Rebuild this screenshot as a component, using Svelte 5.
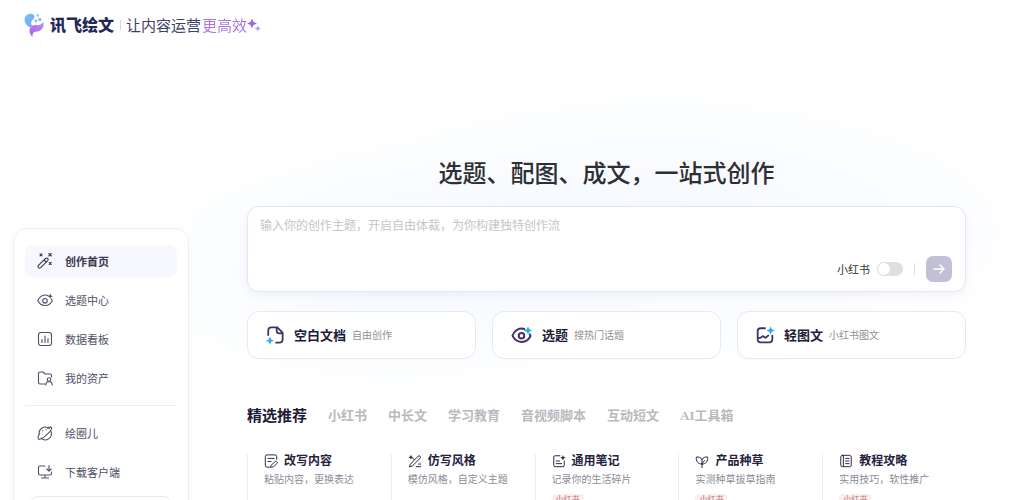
<script>
let topic = $state('')
let redbook = $state(false)
let activeTab = $state('精选推荐')

const menu = [
	{ icon: 'wand', label: '创作首页', active: true },
	{ icon: 'eye', label: '选题中心' },
	{ icon: 'chart', label: '数据看板' },
	{ icon: 'folder', label: '我的资产' },
]

const moreMenu = [
	{ icon: 'planet', label: '绘圈儿' },
	{ icon: 'download', label: '下载客户端' },
]

const entries = [
	{ icon: 'doc', title: '空白文档', sub: '自由创作' },
	{ icon: 'topic', title: '选题', sub: '搜热门话题' },
	{ icon: 'image', title: '轻图文', sub: '小红书图文' },
]

const tabs = ['精选推荐', '小红书', '中长文', '学习教育', '音视频脚本', '互动短文', 'AI工具箱']

const templates = [
	{ icon: 'rewrite', title: '改写内容', desc: '粘贴内容，更换表达' },
	{ icon: 'style', title: '仿写风格', desc: '模仿风格，自定义主题' },
	{ icon: 'note', title: '通用笔记', desc: '记录你的生活碎片', tag: '小红书' },
	{ icon: 'plant', title: '产品种草', desc: '实测种草拔草指南', tag: '小红书' },
	{ icon: 'book', title: '教程攻略', desc: '实用技巧，软性推广', tag: '小红书' },
]
</script>

{#snippet icon(name)}
	<svg class="icon {name}" viewBox="0 0 16 16" aria-hidden="true">
		{#if name === 'wand'}
			<path d="M1.400 12.400 8.500 5.500q1.200-1 2.200 0t0 2.200l-7 7q-1.200 1-2.300 0t0-2.300zM7 7l2.200 2.200" />
			<path d="m3 .8 2 2m0-2-2 2M11.800.5l2.500 2.500m0-2.500L11.800 3M12.200 9.500l2 2m0-2-2 2" />
		{:else if name === 'eye'}
			<path d="M11 3.500C7 2 2.500 4.300.8 8.500c3 6.500 11.400 6.800 14.400.3l-.6-1.800" />
			<circle cx="8" cy="8.800" r="2.300" />
			<path class="fill" d="m13.200 1.500.8 2 2 .8-2 .8-.8 2-.8-2-2-.8 2-.8z" />
		{:else if name === 'chart'}
			<rect x="1.500" y="1.500" width="13" height="13" rx="2.500" />
			<path d="M5 8.500v3M8 5v6.500M11 7.500v4" />
		{:else if name === 'folder'}
			<path d="M8 14H3q-1.500 0-1.500-1.500v-9Q1.500 2 3 2h3l2 2h5q1.500 0 1.500 1.500V7" />
			<circle cx="12" cy="9.500" r="1.800" />
			<path d="M8.800 15q.2-3.300 3.200-3.500 3 .2 3.300 3.500" />
		{:else if name === 'planet'}
			<path d="M12.300 3.600A6.200 6.200 0 0 0 2.200 9.300M4 13.200A6.200 6.200 0 0 0 13.800 6" />
			<path d="M2.300 9.300C.8 11.500.5 13.700 1.800 14.300c3 .6 13.500-8.500 12.900-11.600-.5-1.200-2.600-.4-4.200.4M5.500 5.500v.2M9 4.500v.2" />
		{:else if name === 'download'}
			<path d="M8 2H3Q1.500 2 1.500 3.500v6Q1.500 11 3 11h10q1.500 0 1.500-1.500V8M8 11v3M4.500 14h7M12 1.500V7M9.800 5 12 7.200 14.200 5" />
		{:else if name === 'doc'}
			<path d="M2 8V4q0-2.800 2.800-2.800H10L14.800 6v6q0 2.800-2.800 2.800H9M9.500 1.500v3q0 2 2 2h3" />
			<path class="spark" d="m3.500 9.300 1.100 2.600 2.600 1.100-2.600 1.100-1.100 2.600-1.100-2.600L-.2 13l2.600-1.100z" />
		{:else if name === 'topic'}
			<path d="M10.300 3.200C6.500 2 2.400 4 .8 8.500c3 6.500 11.400 6.800 14.400.3L14.600 7.500" />
			<circle cx="8" cy="8.500" r="2.200" />
			<path class="spark" d="m13.200.9 1 2.400 2.400 1-2.400 1-1 2.400-1-2.400-2.400-1 2.400-1z" />
		{:else if name === 'image'}
			<path d="M8 2H4Q1.500 2 1.500 4.500v7.500q0 2.500 2.500 2.500h8q2.500 0 2.500-2.500V8.500M2 10.500h2l2-1.500 2.500 1.500L11 8.500" />
			<path class="spark" d="m13 .2 1.100 2.700 2.700 1.100-2.700 1.100L13 7.800l-1.100-2.700L9.200 4l2.700-1.100z" />
		{:else if name === 'rewrite'}
			<path d="M6 15H3.500Q1.500 15 1.500 13V3q0-2 2-2h9q2 0 2 2v3M4.500 5h7M4.500 8.500H8" />
			<path d="m8.500 12.500 4.500-4q1.500-.5 2.200.7.300 1-.4 1.700l-4 3.800-3 .5z" />
		{:else if name === 'style'}
			<path d="m2.800 11.500 8.700-9q1.300-1 2.300.1t0 2.300l-8.900 8.800-2.900.9zM9.500 14.500H14.500M12 11.500h2.500M7 6.500 5 4.500" />
			<path class="fill" d="m3.300.8.800 2.100 2.100.8-2.100.8-.8 2.100-.8-2.100L.4 3.700l2.100-.8z" />
		{:else if name === 'note'}
			<path d="M9 2H3.500Q2 2 2 3.500v9.500q0 1.500 1.500 1.500h9q1.500 0 1.500-1.500V8M5 8h3.500M5 11h6" />
			<path class="fill" d="m12.500 1 .9 2.300 2.300.9-2.300.9-.9 2.300-.9-2.300-2.300-.9 2.300-.9z" />
		{:else if name === 'plant'}
			<path d="M8 15.500V6M8 11.500C3 11.500 1 8 1.500 3.500 4 3 7 4 8 6.500 9 4 12 3 14.500 3.500 15 8 13 11.500 8 11.500zM8 11l3-3.500" />
		{:else if name === 'book'}
			<rect x="2" y="1.500" width="12" height="13" rx="2" />
			<path d="M5 2v12M7.500 5h4M7.500 8h4M7.500 11h4" />
		{/if}
	</svg>
{/snippet}

{#snippet menuItem(item)}
	<a href="#{item.icon}" class="menu-item" class:active={item.active}>
		{@render icon(item.icon)}
		<span>{item.label}</span>
	</a>
{/snippet}

<div class="page">
	<header>
		<svg class="logo" viewBox="0 0 20 24" aria-hidden="true">
			<defs>
				<linearGradient id="logoTop" x1="0" y1="0" x2="1" y2="1">
					<stop offset="0" stop-color="#62cdf5" />
					<stop offset="1" stop-color="#8c9af2" />
				</linearGradient>
				<linearGradient id="logoTail" x1="1" y1="0" x2="0" y2="1">
					<stop offset="0" stop-color="#b88cf6" />
					<stop offset="1" stop-color="#b060e8" />
				</linearGradient>
			</defs>
			<path fill="url(#logoTop)" d="M6.500 14.500C1 12.500-1.500 6 2.500 2.200 5.500-.5 10.500.5 10.500 3.800c0 2.400-3 3.400-3.300 5.700-.2 1.600.3 2.600 1.300 3.200-.9.400-1.500.9-2 1.800z" />
			<path fill="url(#logoTail)" d="M8.800 24C4.500 20.500 4.500 15.500 8 13c3-2 5.500.2 8.500-1.500 1.700-1 2.700-2.500 2.700-2.500 1.500 5-1.700 9-5.700 9.500-4 .4-5.700 1.500-4.700 5.500z" />
			<circle cx="13.800" cy="2.500" r="1.200" fill="#72cdf5" />
			<circle cx="15.800" cy="6.500" r="1.700" fill="#8cbdf6" />
			<circle cx="11.800" cy="8" r="1.400" fill="#83b7f5" />
		</svg>
		<strong class="brand">讯飞绘文</strong>
		<span class="bar"></span>
		<span class="slogan">让内容运营</span>
		<span class="slogan accent">更高效</span>
		<svg class="sparkles" viewBox="0 0 14 14" aria-hidden="true">
			<path fill="#9767e4" d="m5 .5 1.500 3.500L10 5.500 6.500 7 5 10.500 3.500 7 0 5.500 3.500 4z" />
			<path fill="#b49bea" d="m10.800 7.500.9 2.100 2.100.9-2.100.9-.9 2.100-.9-2.100-2.100-.9 2.100-.9z" />
		</svg>
	</header>

	<div class="layout">
		<aside>
			<nav>
				{#each menu as item}
					{@render menuItem(item)}
				{/each}
			</nav>
			<hr />
			<nav>
				{#each moreMenu as item}
					{@render menuItem(item)}
				{/each}
			</nav>
			<button class="side-button" aria-label="更多"></button>
		</aside>

		<main>
			<h1>选题、配图、成文，一站式创作</h1>

			<form class="prompt" onsubmit={(e) => e.preventDefault()}>
				<textarea bind:value={topic} aria-label="创作主题" placeholder="输入你的创作主题，开启自由体裁，为你构建独特创作流"></textarea>
				<div class="prompt-tools">
					<label>
						小红书
						<input type="checkbox" class="switch" bind:checked={redbook} />
					</label>
					<span class="split"></span>
					<button class="send" aria-label="开始创作">
						<svg viewBox="0 0 16 16" aria-hidden="true"><path d="M3 8h10M9 4l4 4-4 4" /></svg>
					</button>
				</div>
			</form>

			<div class="entries">
				{#each entries as entry}
					<a href="#{entry.icon}" class="entry">
						{@render icon(entry.icon)}
						<strong>{entry.title}</strong>
						<span>{entry.sub}</span>
					</a>
				{/each}
			</div>

			<div class="tabs">
				{#each tabs as tab}
					<button class:active={activeTab === tab} onclick={() => (activeTab = tab)}>{tab}</button>
				{/each}
			</div>

			<div class="templates">
				{#each templates as item}
					<a href="#{item.icon}" class="template">
						<h2>{@render icon(item.icon)}{item.title}</h2>
						<p>{item.desc}</p>
						{#if item.tag}<span class="tag">{item.tag}</span>{/if}
					</a>
				{/each}
			</div>
		</main>
	</div>
</div>

<style>
:global(body) {
	margin: 0;
	background: #fff;
}

.page {
	height: 100vh;
	overflow: hidden;
	box-sizing: border-box;
	font-family: "Liberation Serif", "Noto Sans CJK SC", serif;
	color: #24233f;
}

.page * {
	box-sizing: border-box;
}

a {
	color: inherit;
	text-decoration: none;
}

button,
textarea {
	font-family: inherit;
	border: 0;
	padding: 0;
	background: none;
}

button {
	cursor: pointer;
}

.icon {
	width: 16px;
	height: 16px;
	flex: none;
	overflow: visible;
	fill: none;
	stroke: currentColor;
	stroke-width: 1.1;
	stroke-linecap: round;
	stroke-linejoin: round;
}

.icon .fill {
	fill: currentColor;
	stroke: none;
}

.icon .spark {
	fill: #27afe5;
	stroke: none;
}

header {
	display: flex;
	align-items: center;
	height: 50px;
	padding-left: 24px;
}

.logo {
	width: 20px;
	height: 24px;
	margin-right: 6px;
}

.brand {
	padding-bottom: 2px;
	font-size: 16px;
	font-weight: 900;
	color: #222955;
}

.bar {
	width: 1px;
	height: 10px;
	margin: 0 5px 0 6px;
	background: #d5d6df;
}

.slogan {
	padding-bottom: 2px;
	font-size: 15px;
	color: #3c4265;
}

.accent {
	margin-left: 1px;
	background: linear-gradient(90deg, #b277da, #a071e8);
	background-clip: text;
	color: transparent;
}

.sparkles {
	width: 14px;
	height: 14px;
}

.layout {
	display: flex;
	align-items: flex-start;
}

aside {
	flex: none;
	width: 176px;
	height: 340px;
	margin: 178px 0 0 13px;
	padding: 16px 11px;
	border: 1px solid #efeff3;
	border-radius: 14px;
	box-shadow: 0 0 6px rgba(40, 40, 80, 0.03);
}

nav {
	display: flex;
	flex-direction: column;
	gap: 7px;
}

.menu-item {
	display: flex;
	align-items: center;
	gap: 12px;
	height: 32px;
	padding-left: 12px;
	border-radius: 7px;
	font-size: 11px;
	color: #504f68;
}

.menu-item span {
	padding-bottom: 1px;
}

.menu-item.active {
	background: #f7f7fe;
	font-weight: bold;
	color: #3a3955;
}

hr {
	height: 1px;
	margin: 11px 0;
	border: 0;
	background: #eeeef2;
}

.side-button {
	display: block;
	width: 142px;
	height: 30px;
	margin: 8px auto 0;
	border: 1px solid #e8e8ee;
	border-radius: 8px;
}

main {
	flex: 1;
	min-width: 0;
	padding: 106px 58px 0;
	background:
		radial-gradient(ellipse 400px 150px at 56% 180px, #f4f8fe, transparent),
		radial-gradient(ellipse 280px 130px at 24% 220px, #f5f9fe, transparent);
}

h1 {
	margin: 0;
	text-align: center;
	font-size: 24px;
	line-height: 36px;
	font-weight: 500;
	color: #2e2f34;
}

.prompt {
	display: flex;
	flex-direction: column;
	margin-top: 14px;
	padding: 9px 13px 9px 12px;
	border: 1px solid #e5e6ee;
	border-radius: 12px;
	background: #fff;
	box-shadow: 0 3px 8px rgba(90, 100, 160, 0.08);
}

textarea {
	height: 40px;
	font-size: 12px;
	line-height: 20px;
	color: #24233f;
	resize: none;
	outline: none;
}

textarea::placeholder {
	color: #c4c5cc;
}

.prompt-tools {
	display: flex;
	justify-content: flex-end;
	align-items: center;
}

label {
	display: flex;
	align-items: center;
	gap: 7px;
	font-size: 11px;
	color: #333;
}

.switch {
	appearance: none;
	width: 26px;
	height: 14px;
	margin: 0;
	border-radius: 7px;
	background: #dfdfe1;
}

.switch::before {
	content: "";
	display: block;
	width: 12px;
	height: 12px;
	margin: 1px;
	border-radius: 50%;
	background: #fff;
}

.switch:checked {
	background: #6a5be2;
}

.switch:checked::before {
	margin-left: 13px;
}

.split {
	width: 1px;
	height: 12px;
	margin: 0 11px;
	background: #dddde2;
}

.send {
	display: flex;
	align-items: center;
	justify-content: center;
	width: 26px;
	height: 26px;
	border-radius: 7px;
	background: #c1c0d6;
}

.send svg {
	width: 16px;
	height: 16px;
	fill: none;
	stroke: #fff;
	stroke-width: 1.6;
	stroke-linecap: round;
	stroke-linejoin: round;
}

.entries {
	display: flex;
	gap: 16px;
	margin-top: 19px;
}

.entry {
	flex: 1;
	display: flex;
	align-items: center;
	height: 48px;
	padding-left: 18px;
	border: 1px solid #e8e9ef;
	border-radius: 12px;
	background: #fff;
}

.entry .icon {
	width: 18px;
	height: 18px;
	margin-right: 10px;
	color: #443267;
	stroke-width: 1.6;
}

.entry .topic {
	width: 21px;
	height: 20px;
}

.entry strong {
	padding-bottom: 2px;
	font-size: 13px;
	color: #1e1b38;
}

.entry span {
	margin-left: 6px;
	padding-bottom: 1px;
	font-size: 10px;
	color: #8f8f99;
}

.tabs {
	display: flex;
	align-items: center;
	gap: 21px;
	height: 24px;
	margin-top: 43px;
}

.tabs button {
	font-size: 13px;
	font-weight: bold;
	color: #b9b9c0;
	white-space: nowrap;
}

.tabs button.active {
	font-size: 15px;
	color: #1e1b38;
}

.templates {
	display: grid;
	grid-template-columns: repeat(5, 1fr);
	margin-top: 28px;
}

.template {
	height: 80px;
	padding-left: 16px;
	border-left: 1px solid #eaeaef;
	white-space: nowrap;
}

h2 {
	display: flex;
	align-items: center;
	gap: 6px;
	margin: 0;
	font-size: 12px;
	line-height: 14px;
	color: #25223d;
}

h2 .icon {
	width: 14px;
	height: 14px;
}

p {
	margin: 4px 0 6px;
	font-size: 10px;
	line-height: 16px;
	color: #8b8b96;
}

.tag {
	display: block;
	width: fit-content;
	padding: 0 4px;
	border-radius: 3px;
	background: #fdeeee;
	font-size: 8px;
	line-height: 12px;
	color: #b96f73;
}
</style>
